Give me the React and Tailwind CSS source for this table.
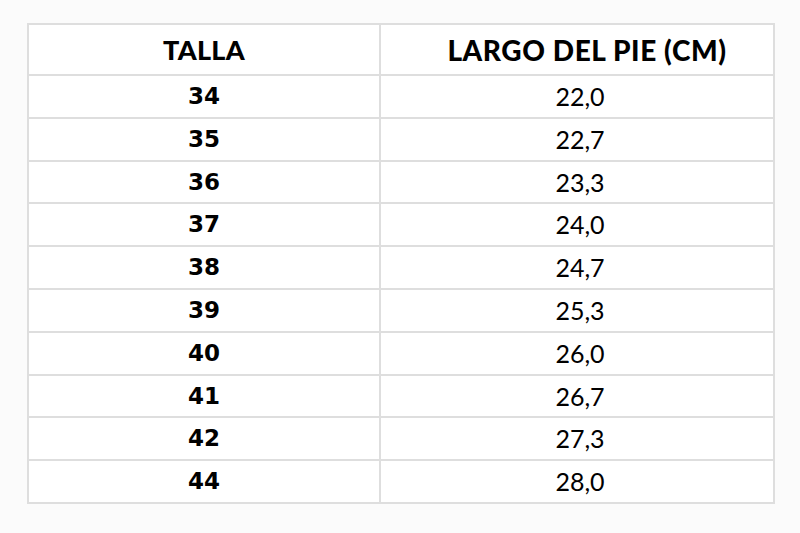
const rows = [
  ['34', '22,0', 'h-[43px]'],
  ['35', '22,7', 'h-[43px]'],
  ['36', '23,3', 'h-[42px]'],
  ['37', '24,0', 'h-[43px]'],
  ['38', '24,7', 'h-[43px]'],
  ['39', '25,3', 'h-[43px]'],
  ['40', '26,0', 'h-[43px]'],
  ['41', '26,7', 'h-[42px]'],
  ['42', '27,3', 'h-[43px]'],
  ['44', '28,0', 'h-[43px]'],
]

export default function App() {
  return (
    <div className="w-[800px] h-[533px] bg-[#fbfbfb] pl-[27px] pt-[23px] text-black">
      <table className="table-fixed border-collapse bg-white w-[746px]">
        <colgroup>
          <col className="w-[352px]" />
          <col className="w-[394px]" />
        </colgroup>
        <thead>
          <tr className="h-[51px]">
            <th className="border-2 border-[#dedede] p-0 text-center align-middle font-['Lato',sans-serif] font-black text-[27px] tracking-[0.3px] leading-none">
              TALLA
            </th>
            <th className="border-2 border-[#dedede] p-0 text-center align-middle font-['Lato',sans-serif] font-black text-[28px] tracking-[0.6px] leading-none pl-[20px]">
              LARGO DEL PIE (CM)
            </th>
          </tr>
        </thead>
        <tbody>
          {rows.map(([size, len, h]) => (
            <tr key={size} className={h}>
              <td className="border-2 border-[#dedede] p-0 text-center align-middle font-['DejaVu_Sans',sans-serif] font-bold text-[23px] leading-none">
                {size}
              </td>
              <td className="border-2 border-[#dedede] p-0 text-center align-middle font-['Lato',sans-serif] text-[25px] leading-none pl-[6px]">
                {len}
              </td>
            </tr>
          ))}
        </tbody>
      </table>
    </div>
  )
}
